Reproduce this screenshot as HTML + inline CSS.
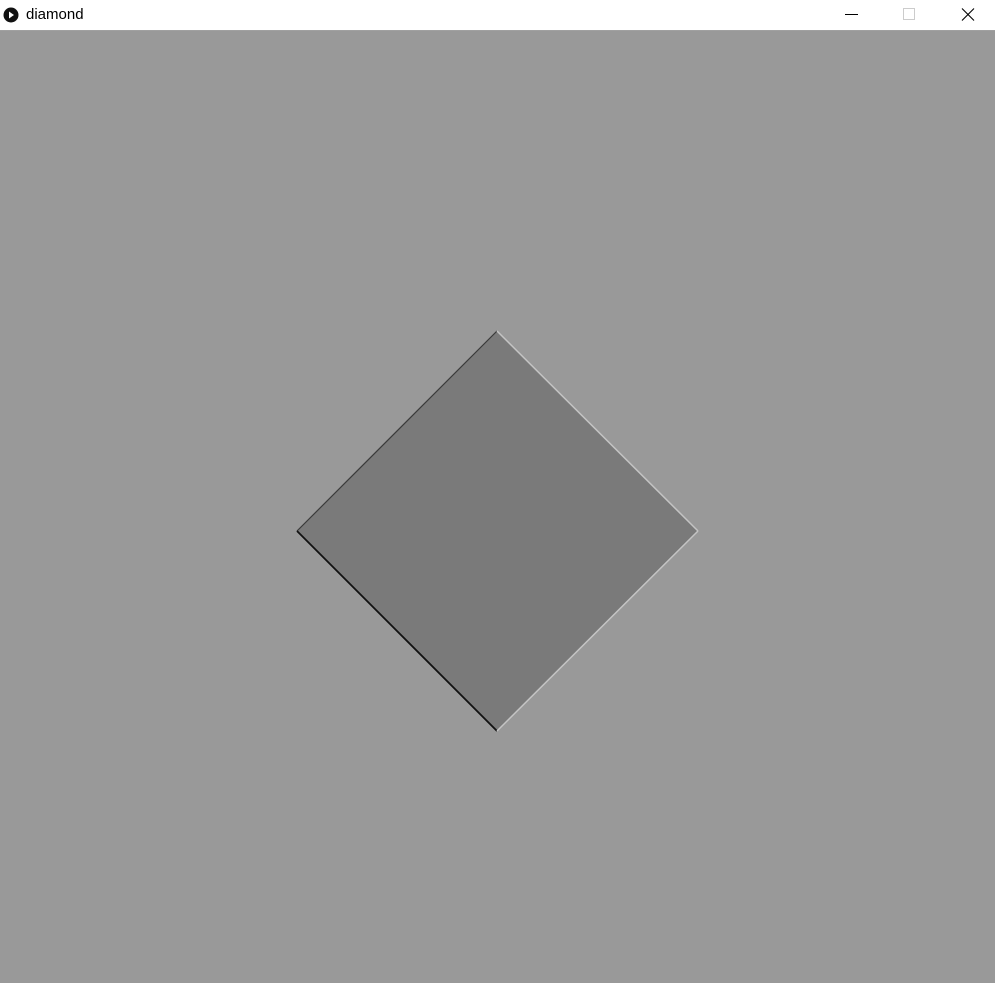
<!DOCTYPE html>
<html><head><style>
html,body{margin:0;padding:0;width:995px;height:983px;overflow:hidden;background:#999999;}
.bar{position:absolute;left:0;top:0;width:995px;height:30px;background:#fff;border-bottom:1px solid #a0a0a0;}
.t{position:absolute;left:26px;top:6px;font:15px "Liberation Sans",sans-serif;color:#000;}
</style></head><body>
<div class="bar">
<svg style="position:absolute;left:3px;top:7px" width="16" height="16" viewBox="0 0 16 16"><circle cx="8" cy="8" r="7.5" fill="#111"/><path d="M6 4.5L11 8L6 11.5Z" fill="#fff"/></svg>
<div class="t">diamond</div>
<svg style="position:absolute;left:830px;top:0" width="165" height="30">
<line x1="15" y1="14.5" x2="28" y2="14.5" stroke="#000" stroke-width="1"/>
<rect x="73.5" y="8.5" width="11" height="11" fill="none" stroke="#ccc"/>
<path d="M132 8.5L144 20.5M144 8.5L132 20.5" stroke="#000" stroke-width="1.1"/>
</svg>
</div>
<svg style="position:absolute;left:0;top:0" width="995" height="983">
<polygon points="497,331 698,531 497,731 297,531" fill="#7a7a7a"/>
<line x1="297" y1="531" x2="497" y2="331" stroke="#3a3a3a" stroke-width="1.2"/>
<line x1="297" y1="531" x2="497" y2="731" stroke="#111" stroke-width="1.8"/>
<line x1="497" y1="331" x2="698" y2="531" stroke="#c4c4c4" stroke-width="1.5"/>
<line x1="698" y1="531" x2="497" y2="731" stroke="#c4c4c4" stroke-width="1.5"/>
</svg>
</body></html>
